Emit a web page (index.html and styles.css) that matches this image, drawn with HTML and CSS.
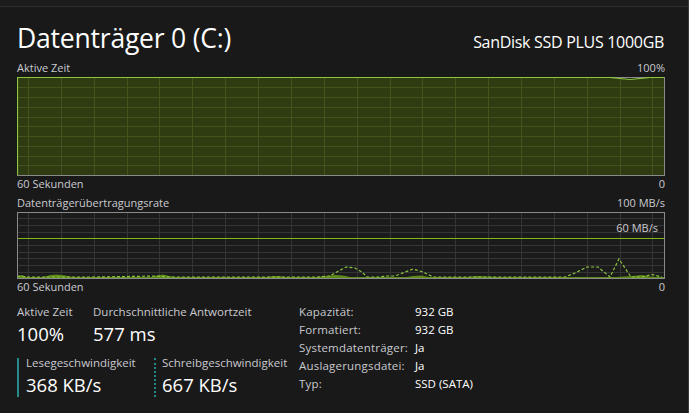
FILE: index.html
```html
<!DOCTYPE html>
<html lang="de">
<head>
<meta charset="utf-8">
<title>Datenträger 0 (C:)</title>
<link rel="stylesheet" href="styles.css">
</head>
<body>
<div class="page">
  <div class="topbar"></div>
  <div class="content">
    <div class="header">
      <h1 class="title">Datenträger 0 (C:)</h1>
      <div class="model">SanDisk SSD PLUS 1000GB</div>
    </div>

    <div class="axis-row axis-top1">
      <span>Aktive Zeit</span>
      <span>100%</span>
    </div>
    <svg class="chart chart1" width="648" height="99" viewBox="0 0 648 99" shape-rendering="crispEdges">
      <rect x="0" y="0" width="648" height="99" fill="#191919"/>
      <polygon points="0,0 593,0 603,1 613,2 623,1 633,0 647,0 647,98 0,98" fill="#2f3c12" shape-rendering="auto"/>
      <g stroke="#42531c" stroke-width="1">
        <line x1="11.5" y1="0" x2="11.5" y2="98"/><line x1="44.5" y1="0" x2="44.5" y2="98"/>
        <line x1="77.5" y1="0" x2="77.5" y2="98"/><line x1="110.5" y1="0" x2="110.5" y2="98"/>
        <line x1="142.5" y1="0" x2="142.5" y2="98"/><line x1="175.5" y1="0" x2="175.5" y2="98"/>
        <line x1="208.5" y1="0" x2="208.5" y2="98"/><line x1="241.5" y1="0" x2="241.5" y2="98"/>
        <line x1="274.5" y1="0" x2="274.5" y2="98"/><line x1="307.5" y1="0" x2="307.5" y2="98"/>
        <line x1="340.5" y1="0" x2="340.5" y2="98"/><line x1="373.5" y1="0" x2="373.5" y2="98"/>
        <line x1="405.5" y1="0" x2="405.5" y2="98"/><line x1="438.5" y1="0" x2="438.5" y2="98"/>
        <line x1="471.5" y1="0" x2="471.5" y2="98"/><line x1="504.5" y1="0" x2="504.5" y2="98"/>
        <line x1="537.5" y1="0" x2="537.5" y2="98"/><line x1="570.5" y1="0" x2="570.5" y2="98"/>
        <line x1="603.5" y1="0" x2="603.5" y2="98"/><line x1="635.5" y1="0" x2="635.5" y2="98"/>
        <line x1="0" y1="10.5" x2="648" y2="10.5"/><line x1="0" y1="20.5" x2="648" y2="20.5"/>
        <line x1="0" y1="30.5" x2="648" y2="30.5"/><line x1="0" y1="40.5" x2="648" y2="40.5"/>
        <line x1="0" y1="49.5" x2="648" y2="49.5"/><line x1="0" y1="59.5" x2="648" y2="59.5"/>
        <line x1="0" y1="69.5" x2="648" y2="69.5"/><line x1="0" y1="79.5" x2="648" y2="79.5"/>
        <line x1="0" y1="88.5" x2="648" y2="88.5"/>
      </g>
      <rect x="0.5" y="0.5" width="647" height="98" fill="none" stroke="#8a8a8a" stroke-width="1"/>
      <polyline points="0.5,98 0.5,0.5 593,0.5 603,1.5 613,2.5 623,1.5 633,0.5 647,0.5" fill="none" stroke="#8cc63f" stroke-width="1.2" shape-rendering="auto"/>
    </svg>
    <div class="axis-row axis-bottom">
      <span>60 Sekunden</span>
      <span>0</span>
    </div>

    <div class="axis-row axis-top2">
      <span>Datenträgerübertragungsrate</span>
      <span>100 MB/s</span>
    </div>
    <div class="chart-wrap">
      <svg class="chart chart2" width="648" height="67" viewBox="0 0 648 67" shape-rendering="crispEdges">
        <rect x="0" y="0" width="648" height="67" fill="#1b1b1b"/>
        <g stroke="#353535" stroke-width="1">
          <line x1="11.5" y1="0" x2="11.5" y2="66"/><line x1="44.5" y1="0" x2="44.5" y2="66"/>
          <line x1="77.5" y1="0" x2="77.5" y2="66"/><line x1="110.5" y1="0" x2="110.5" y2="66"/>
          <line x1="142.5" y1="0" x2="142.5" y2="66"/><line x1="175.5" y1="0" x2="175.5" y2="66"/>
          <line x1="208.5" y1="0" x2="208.5" y2="66"/><line x1="241.5" y1="0" x2="241.5" y2="66"/>
          <line x1="274.5" y1="0" x2="274.5" y2="66"/><line x1="307.5" y1="0" x2="307.5" y2="66"/>
          <line x1="340.5" y1="0" x2="340.5" y2="66"/><line x1="373.5" y1="0" x2="373.5" y2="66"/>
          <line x1="405.5" y1="0" x2="405.5" y2="66"/><line x1="438.5" y1="0" x2="438.5" y2="66"/>
          <line x1="471.5" y1="0" x2="471.5" y2="66"/><line x1="504.5" y1="0" x2="504.5" y2="66"/>
          <line x1="537.5" y1="0" x2="537.5" y2="66"/><line x1="570.5" y1="0" x2="570.5" y2="66"/>
          <line x1="603.5" y1="0" x2="603.5" y2="66"/><line x1="635.5" y1="0" x2="635.5" y2="66"/>
          <line x1="0" y1="6.5" x2="648" y2="6.5"/><line x1="0" y1="13.5" x2="648" y2="13.5"/>
          <line x1="0" y1="20.5" x2="648" y2="20.5"/><line x1="0" y1="33.5" x2="648" y2="33.5"/>
          <line x1="0" y1="40.5" x2="648" y2="40.5"/><line x1="0" y1="46.5" x2="648" y2="46.5"/>
          <line x1="0" y1="53.5" x2="648" y2="53.5"/><line x1="0" y1="60.5" x2="648" y2="60.5"/>
        </g>
        <line x1="0" y1="26.5" x2="648" y2="26.5" stroke="#7dbb12" stroke-width="1.5"/>
        <g shape-rendering="auto">
          <polygon points="0,66 0,64 5,63 10,65 26,65 34,63 40,62.5 48,63.5 56,65 135,65 140,63.5 146,62.5 152,64 158,65 250,65 256,64 262,64 268,65 300,65 310,64 318,63 326,63.5 333,65 390,65 396,64 404,63.5 412,65 450,65 460,64 470,64.5 480,65 600,65 615,64 625,63 632,64.5 640,65 647,65 647,66"
                   fill="#6a9e1a" opacity="0.85"/>
          <polyline points="0,64 10,65 60,65 80,65 140,64 150,65 200,65 300,65 313,64 318,61 329,55 338,56 345,60 350,65 361,65 371,64 378,64 396,57 406,60 416,65 548,65 558,61 570,55 581,55 593,65 602,47 614,65 625,65 635,62.5 645,65"
                    fill="none" stroke="#8cc63f" stroke-width="1.2" stroke-dasharray="3 2"/>
        </g>
        <rect x="0.5" y="0.5" width="647" height="66" fill="none" stroke="#8a8a8a" stroke-width="1"/>
      </svg>
      <span class="chart-note">60 MB/s</span>
    </div>
    <div class="axis-row axis-bottom">
      <span>60 Sekunden</span>
      <span>0</span>
    </div>

    <div class="stats">
      <div class="stats-left">
        <div class="stat-row">
          <div class="stat stat-active">
            <div class="stat-label">Aktive Zeit</div>
            <div class="stat-value">100%</div>
          </div>
          <div class="stat">
            <div class="stat-label">Durchschnittliche Antwortzeit</div>
            <div class="stat-value">577 ms</div>
          </div>
        </div>
        <div class="stat-row">
          <div class="stat stat-read">
            <div class="stat-label">Lesegeschwindigkeit</div>
            <div class="stat-value">368 KB/s</div>
          </div>
          <div class="stat stat-write">
            <div class="stat-label">Schreibgeschwindigkeit</div>
            <div class="stat-value">667 KB/s</div>
          </div>
        </div>
      </div>
      <dl class="props">
        <dt>Kapazität:</dt><dd>932 GB</dd>
        <dt>Formatiert:</dt><dd>932 GB</dd>
        <dt>Systemdatenträger:</dt><dd>Ja</dd>
        <dt>Auslagerungsdatei:</dt><dd>Ja</dd>
        <dt>Typ:</dt><dd>SSD (SATA)</dd>
      </dl>
    </div>
  </div>
</div>
</body>
</html>
```
FILE: styles.css
```css
* { box-sizing: border-box; }
html, body {
  margin: 0;
  padding: 0;
  background: #191919;
}
body {
  width: 689px;
  height: 413px;
  overflow: hidden;
  font-family: "Open Sans", "Noto Sans", "Liberation Sans", sans-serif;
  color: #ffffff;
}
.page {
  width: 689px;
  height: 413px;
  border-right: 1px solid #3a3a3a;
  background: #191919;
}
.topbar {
  height: 7px;
  background: #1c1c1c;
  border-bottom: 1px solid #2f2f33;
}
.content {
  padding: 0 24px 0 17px;
}
.header {
  display: flex;
  justify-content: space-between;
  align-items: baseline;
  height: 53px;
  padding-top: 14px;
}
.title {
  margin: 0;
  font-weight: 400;
  font-size: 26.5px;
  letter-spacing: -0.2px;
  line-height: 34px;
  color: #ffffff;
}
.model {
  font-size: 16px;
  letter-spacing: -0.3px;
  color: #ffffff;
}
.axis-row {
  display: flex;
  justify-content: space-between;
  font-size: 11px;
  line-height: 15px;
  color: #c9c9cf;
  width: 648px;
}
.axis-top1 { height: 17px; }
.axis-bottom { height: 18px; }
.axis-top2 { height: 18px; padding-top: 1px; }
.chart { display: block; }
.chart-wrap {
  position: relative;
  width: 648px;
  height: 67px;
}
.chart-note {
  position: absolute;
  right: 7px;
  top: 9px;
  font-size: 11px;
  line-height: 14px;
  color: #c9c9cf;
}
.stats {
  display: flex;
  margin-top: 10px;
}
.stats-left {
  width: 282px;
}
.stat-row {
  display: flex;
  height: 39px;
}
.stat-row + .stat-row { margin-top: 12px; }
.stat-label {
  font-size: 11.5px;
  line-height: 10px;
  color: #c9c9cf;
  white-space: nowrap;
}
.stat-value {
  margin-top: 5px;
  font-size: 18.5px;
  line-height: 24px;
  color: #ffffff;
  white-space: nowrap;
}
.stat-active { width: 76px; }
.stat-read {
  width: 137px;
  border-left: 2px solid #278a8a;
  padding-left: 7px;
}
.stat-write {
  border-left: 2px dotted #278a8a;
  padding-left: 6px;
}
.props {
  margin: -4px 0 0 0;
  display: grid;
  grid-template-columns: 116px auto;
  grid-auto-rows: 18px;
  font-size: 11.5px;
  line-height: 18px;
  align-content: start;
}
.props dt { color: #c9c9cf; letter-spacing: 0.2px; }
.props dd { margin: 0; color: #ffffff; }
```
